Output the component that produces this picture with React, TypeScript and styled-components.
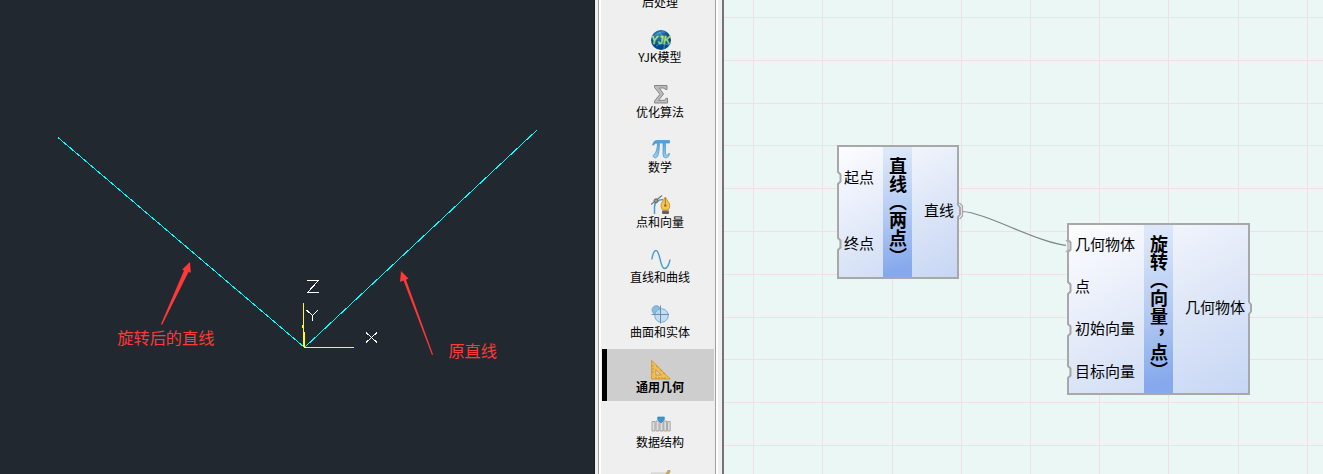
import React from 'react';
import styled, { createGlobalStyle, css } from 'styled-components';

const cjk = `'Noto Sans CJK SC', sans-serif`;

const GlobalStyle = createGlobalStyle`
  body { margin: 0; overflow: hidden; font-family: ${cjk}; }
  svg { display: block; }
`;

const Window = styled.div`
  display: grid;
  grid-template-columns: 595px 129px 1fr;
  width: 1323px;
  height: 474px;
  overflow: hidden;
`;

const Viewport = styled.div`
  background: #212830;
  box-sizing: border-box;
  border-right: 1px solid #1a2028;
  overflow: hidden;
`;

const Splitter = styled.div`
  box-sizing: border-box;
  display: flex;
  height: 474px;
  background: #efefef;
  border-right: 2px solid #747474;
  padding: 0 4px 0 3px;
`;

const Palette = styled.div`
  box-sizing: border-box;
  width: 120px;
  height: 474px;
  overflow: hidden;
  display: flex;
  flex-direction: column;
  gap: 3px;
  border-left: 1px solid #a0a0a0;
  border-right: 2px solid #fff;
  box-shadow: inset 2px 0 #fff, inset -1px 0 #a0a0a0;
  padding: 0 1px 0 3px;
`;

const PaletteItem = styled.div<{ $active?: boolean; $first?: boolean }>`
  box-sizing: border-box;
  flex: none;
  height: 52px;
  width: 112px;
  margin-top: ${p => (p.$first ? -36 : 0)}px;
  padding: 11px 0 0;
  display: flex;
  flex-direction: column;
  align-items: center;
  color: #000;
  ${p => p.$active && css`
    background: #cecece;
    box-shadow: inset 5px 0 #000;
    font-weight: 700;
  `}
`;

const PaletteLabel = styled.span`
  font-size: 12px;
  line-height: 16px;
  white-space: nowrap;
  padding-left: 4px;
  letter-spacing: 0.02px;
`;

const IconSlot = styled.span`
  width: 20px;
  height: 19px;
  margin-left: 5px;
`;

const Canvas = styled.div`
  position: relative;
  background: #ebf7f4;
  overflow: hidden;
`;

const CanvasNode = styled.div<{ $x: number; $y: number; $w: number; $h: number; $columns: string }>`
  position: absolute;
  left: ${p => p.$x}px;
  top: ${p => p.$y}px;
  width: ${p => p.$w}px;
  height: ${p => p.$h}px;
  box-sizing: border-box;
  border: 2px solid #a8a8a8;
  background: linear-gradient(150deg, #fdfdff 0%, #e0e8f8 52%, #c6d6f4 100%);
  display: grid;
  grid-template-columns: ${p => p.$columns};
  grid-template-rows: 100%;
`;

const PortColumn = styled.div<{ $pad: number }>`
  padding-top: ${p => p.$pad}px;
`;

const PortRow = styled.div<{ $h: number; $out?: boolean }>`
  height: ${p => p.$h}px;
  display: flex;
  align-items: center;
  justify-content: ${p => (p.$out ? 'flex-end' : 'flex-start')};
  margin: ${p => (p.$out ? '0 -6px 0 0' : '0 0 0 -3px')};
`;

const PortLabel = styled.span<{ $pull?: boolean }>`
  font-size: 15px;
  line-height: 20px;
  padding-bottom: 3px;
  margin-left: ${p => (p.$pull ? -1 : 0)}px;
  white-space: nowrap;
  color: #000;
`;

const NodeTitle = styled.div`
  box-sizing: border-box;
  padding-top: 10px;
  background: linear-gradient(165deg, #dce7fa 5%, #b4cbf3 50%, #86a9ed 92%);
  writing-mode: vertical-rl;
  line-height: 29px;
  font-size: 18px;
  font-weight: 700;
  color: #000;
  white-space: nowrap;
`;

const Comma = styled.span`
  display: inline-block;
  transform: translate(-2px, 4px);
`;

const Port = ({ out, linked }: { out?: boolean; linked?: boolean }) => (
  <svg width="9" height="18" viewBox="0 0 9 18" overflow="visible">
    {!out && <rect x="0" y="3" width="3" height="12" fill="#ebf7f4" />}
    {out && <rect x="1" y="3" width="4" height="12" fill="#dbe5f8" />}
    <path
      d={out ? 'M4 2V3L6 5.5V12.5L4 15V16' : 'M2 2V3L4.5 5.5V12.5L2 15V16'}
      fill="none"
      stroke="#a8a8a8"
      strokeWidth="2"
    />
    {linked && (
      <path
        d={out ? 'M5.5 1L8.5 4V14L5.5 17' : 'M0 3L2 5.5V12.5L0 15'}
        fill="none"
        stroke="#a8a8a8"
        strokeWidth="1.2"
      />
    )}
  </svg>
);

const Glyph = ({ kind }: { kind: string }) => {
  switch (kind) {
    case 'yjk':
      return (
        <svg width="20" height="20" viewBox="0 0 20 20">
          <defs>
            <radialGradient id="globe" cx=".4" cy=".25"><stop offset="0" stopColor="#3487bd" /><stop offset="1" stopColor="#004a8e" /></radialGradient>
            <linearGradient id="leaf" x2="0" y2="1"><stop stopColor="#e6ee86" /><stop offset="1" stopColor="#5cc86c" /></linearGradient>
          </defs>
          <circle cx="10" cy="10" r="10" fill="url(#globe)" />
          <path d="M2 7Q8 1 14 2M5 16Q10 12 18 15M8 2Q15 9 13 19" stroke="#75b9dc" strokeWidth=".6" fill="none" />
          <text x="9.8" y="14" textAnchor="middle" fontFamily="Liberation Sans, sans-serif" fontWeight="700" fontStyle="italic" fontSize="10" fill="url(#leaf)" stroke="#a5db75" strokeWidth=".3">YJK</text>
        </svg>
      );
    case 'sum':
      return (
        <svg width="20" height="20" viewBox="0 1 20 20">
          <path d="M3.5 1.5H16V5.5H14.3L13.3 4H8.3L12.5 10L7.5 16.3H13.5L15 14.3H16.5V19H3.5V17L9 10.3L3.5 3.3Z" fill="#bdbdbd" stroke="#858585" strokeWidth="1" />
        </svg>
      );
    case 'pi':
      return (
        <svg width="20" height="20" viewBox="0 1 20 20">
          <defs><linearGradient id="blue" x2="0" y2="1"><stop stopColor="#4d9cd3" /><stop offset="1" stopColor="#9ed0f2" /></linearGradient></defs>
          <path d="M1.5 6Q2.5 1.5 5.5 1.5H18.5V4H14.5V14Q14.5 16.5 16 16.5Q17 16.5 17.5 14.5H18.5Q18 18.8 14.7 18.8Q12 18.8 12 15.5V4H8.5Q8.4 14 6.5 17.5Q4.5 20 2.5 18Q1.5 16.5 3 15.5Q6.2 13 6.5 4Q4 4 2.5 6Z" fill="url(#blue)" stroke="#4a94c8" strokeWidth=".7" />
        </svg>
      );
    case 'vector':
      return (
        <svg width="20" height="20" viewBox="0 0 20 20">
          <path d="M3.5 19V12Q3.5 5 12 4.5" fill="none" stroke="#4aa0d2" strokeWidth="1.5" />
          <path d="M0 9.5L11 .5" stroke="#777" strokeWidth="1.3" />
          <circle cx="5" cy="5.8" r="2" fill="#999" stroke="#666" />
          <path d="M14.3 2L10.3 8.5Q9 11 11.5 15H17.3Q19.8 11 18.3 8.5Z" fill="#f5c451" stroke="#c58a25" strokeWidth=".8" />
          <path d="M14.3 3V9" stroke="#916a20" strokeWidth=".8" /><circle cx="14.3" cy="10.5" r="1.2" fill="#8b692d" />
          <rect x="11" y="15.5" width="7" height="3.5" rx="1" fill="#6b6257" />
        </svg>
      );
    case 'curve':
      return (
        <svg width="20" height="20" viewBox="0 .5 20 20">
          <path d="M.8 10C2 3 3.4 1 5 1C9.2 1 9 19 13.5 19C16.5 19 18.5 13.5 19 10" fill="none" stroke="#459bce" strokeWidth="1.4" />
        </svg>
      );
    case 'solid':
      return (
        <svg width="20" height="20" viewBox="0 .5 20 20">
          <circle cx="5.3" cy="5.5" r="4.3" fill="#8bbce2" stroke="#679fc7" strokeWidth=".8" />
          <circle cx="10.5" cy="11" r="6.8" fill="#b8d9f2" fillOpacity=".85" stroke="#71a6cc" strokeWidth=".9" />
          <path d="M.5 10H18M9.5 1V19" stroke="#65859a" strokeWidth=".9" />
        </svg>
      );
    case 'triangle':
      return (
        <svg width="20" height="20" viewBox="0 0 20 20">
          <path fillRule="evenodd" d="M.6 .3L19.2 19H.6ZM4.8 9.5V15H10.3Z" fill="#f0bd58" stroke="#cf942e" strokeWidth=".9" />
          <path d="M1 6H3M1 9H3M1 12H3M5 17V19M8 17V19M11 17V19M14 17V19M5 6L7 7M9 10L11 11M12 13L14 14" stroke="#b77d27" strokeWidth=".6" />
        </svg>
      );
    case 'data':
      return (
        <svg width="20" height="20" viewBox="0 1 20 20">
          <path d="M1 7.5H4V17H1ZM5 7H8V17H5ZM9 7H12V17H9ZM12.8 7H15.6V17H12.8ZM16.5 7.5H19.2V17H16.5Z" fill="#dcdcdc" stroke="#a2a2a2" strokeWidth=".9" />
          <path d="M6.7 3H13.3V5.7L10 9L6.7 5.7Z" fill="#3e97cf" stroke="#217bb3" strokeWidth=".6" />
        </svg>
      );
    case 'edit':
      return (
        <svg width="20" height="20" viewBox="0 0 20 20">
          <path d="M.5 3H15.5V19H.5Z" fill="#e6e6e6" stroke="#c4c4c4" strokeWidth=".8" />
          <path d="M15 4L17 .3H19V2L17.5 4Z" fill="#e9a93a" stroke="#90815e" strokeWidth=".5" />
        </svg>
      );
    default:
      return null;
  }
};

const items = [
  { icon: '', label: '后处理' },
  { icon: 'yjk', label: 'YJK模型' },
  { icon: 'sum', label: '优化算法' },
  { icon: 'pi', label: '数学' },
  { icon: 'vector', label: '点和向量' },
  { icon: 'curve', label: '直线和曲线' },
  { icon: 'solid', label: '曲面和实体' },
  { icon: 'triangle', label: '通用几何', active: true },
  { icon: 'data', label: '数据结构' },
  { icon: 'edit', label: '' },
];

const Drawing = () => (
  <svg width="594" height="474" viewBox="0 0 594 474" fontFamily={cjk}>
    <g fill="none" strokeWidth="1" shapeRendering="crispEdges">
      <path d="M58 137.5L304.5 347.5L537 130" stroke="#00ffff" />
      <path d="M303.5 303V347M304.5 332V347M302.5 325V328M304 347.5H354" stroke="#ffff00" />
      <path d="M307 280.5H318.5L307.5 292.5H318.5M306.5 310L312.5 315.5L318 310M312.5 315.5V321M366 332.5L377 342.5M377 332.5L366 342.5" stroke="#fff" />
    </g>
    <g fill="#ff3838">
      <path d="M161 324L184 270.5L182.2 269.5L190 262L190.8 272.8L188.5 272L162 325Z" />
      <path d="M432 355L403.5 280.5L400 282L401 271L408.5 278.5L406 279.8L433 354.5Z" />
      <text x="117.3" y="344" fontSize="16.2">旋转后的直线</text>
      <text x="448.4" y="357" fontSize="16.2">原直线</text>
    </g>
  </svg>
);

const Backdrop = styled.svg`
  position: absolute;
  inset: 0;
`;

const columns = [753, 822, 892, 961, 1030, 1099, 1168, 1238, 1307];
const rows = [17, 60, 103, 145, 188, 231, 274, 317, 359, 402, 445];

export default function App() {
  return (
    <Window>
      <GlobalStyle />
      <Viewport><Drawing /></Viewport>
      <Splitter>
        <Palette>
          {items.map((item, i) => (
            <PaletteItem key={i} $active={item.active} $first={i === 0}>
              <IconSlot><Glyph kind={item.icon} /></IconSlot>
              <PaletteLabel>{item.label}</PaletteLabel>
            </PaletteItem>
          ))}
        </Palette>
      </Splitter>
      <Canvas>
        <Backdrop width="599" height="474" viewBox="724 0 599 474">
          <g stroke="#f0e0e1" shapeRendering="crispEdges">
            {columns.map(x => <path key={x} d={`M${x + 0.5} 0V474`} />)}
            {rows.map(y => <path key={y} d={`M724 ${y + 0.5}H1323`} />)}
          </g>
          <path d="M962 211.5C985 212 1042 245 1069 245.5" fill="none" stroke="#7c8482" strokeWidth="1.1" />
        </Backdrop>
        <CanvasNode $x={113} $y={145} $w={122} $h={134} $columns="44px 29px 45px">
          <PortColumn $pad={14}>
            <PortRow $h={34}><Port /><PortLabel $pull>起点</PortLabel></PortRow>
            <PortRow $h={98}><Port /><PortLabel $pull>终点</PortLabel></PortRow>
          </PortColumn>
          <NodeTitle>直线（两点）</NodeTitle>
          <PortColumn $pad={47}>
            <PortRow $h={34} $out><PortLabel>直线</PortLabel><Port out linked /></PortRow>
          </PortColumn>
        </CanvasNode>
        <CanvasNode $x={343} $y={223} $w={183} $h={172} $columns="75px 29px 75px">
          <PortColumn $pad={0}>
            <PortRow $h={41}><Port linked /><PortLabel>几何物体</PortLabel></PortRow>
            <PortRow $h={43}><Port /><PortLabel>点</PortLabel></PortRow>
            <PortRow $h={41}><Port /><PortLabel>初始向量</PortLabel></PortRow>
            <PortRow $h={44}><Port /><PortLabel>目标向量</PortLabel></PortRow>
          </PortColumn>
          <NodeTitle>旋转（向量<Comma>，</Comma>点）</NodeTitle>
          <PortColumn $pad={66}>
            <PortRow $h={34} $out><PortLabel>几何物体</PortLabel><Port out /></PortRow>
          </PortColumn>
        </CanvasNode>
      </Canvas>
    </Window>
  );
}
